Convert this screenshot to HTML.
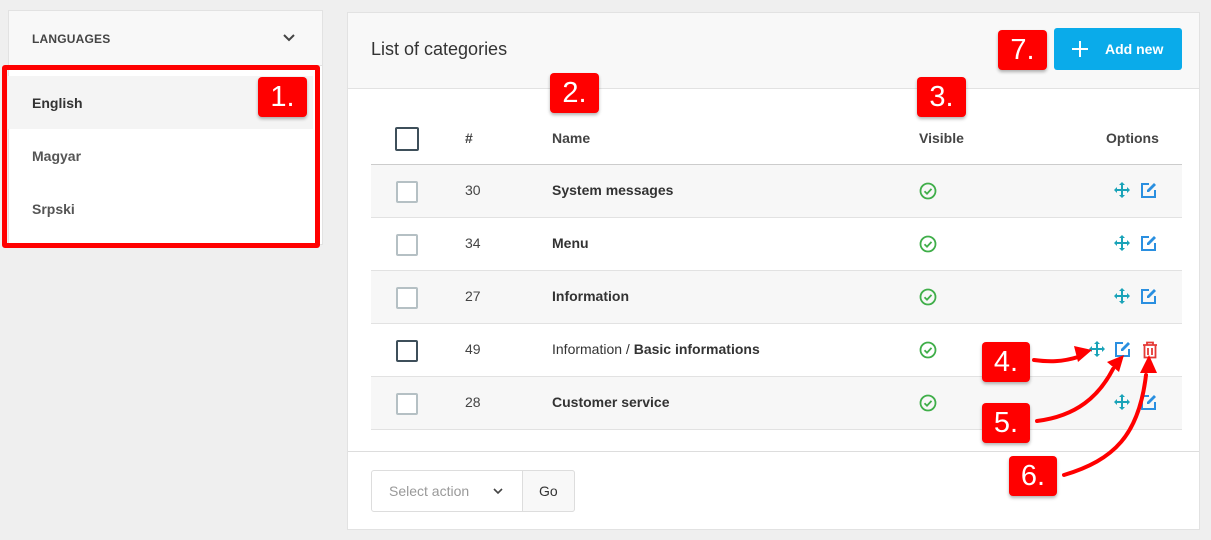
<!DOCTYPE html>
<html><head><style>
*{box-sizing:border-box;margin:0;padding:0}
body{width:1211px;height:540px;background:#efefef;font-family:"Liberation Sans",sans-serif;position:relative;overflow:hidden;color:#333}
.abs{position:absolute}
.badge{position:absolute;background:#f00;color:#fff;font-size:29px;border-radius:4px;text-align:center;line-height:40px;height:40px;width:42px;box-shadow:0 2px 3px rgba(0,0,0,.3)}
.row{position:absolute;left:371px;width:811px;height:53px;border-bottom:1px solid #e2e2e2;font-size:14px}
.row.s{background:#f7f7f7}
.cb{position:absolute;left:25px;top:16px;width:22px;height:22px;border:2px solid #b5c0c4;border-radius:2px;background:#fff}
.num{position:absolute;left:94px;top:17px;color:#444}
.nm{position:absolute;left:181px;top:17px;font-weight:bold;color:#333}
.vis{position:absolute;left:548px;top:17px}
.mv{position:absolute;left:743px;top:17px}
.ed{position:absolute;left:769px;top:16px}
</style></head><body>
<div class="abs" style="left:8px;top:10px;width:315px;height:235px;background:#fff;border:1px solid #e2e2e2"></div>
<div class="abs" style="left:8px;top:10px;width:315px;height:56px;background:#f8f8f8;border:1px solid #e2e2e2"></div>
<div class="abs" style="left:32px;top:32px;font-size:12px;font-weight:bold;color:#444;letter-spacing:.2px">LANGUAGES</div>
<svg class="abs" style="left:282px;top:33px" width="14" height="10"><path d="M2 2l5 5 5-5" stroke="#444" stroke-width="2" fill="none"/></svg>
<div class="abs" style="left:8px;top:76px;width:305px;height:53px;background:#f4f4f4"></div>
<div class="abs" style="left:32px;top:95px;font-size:14px;font-weight:bold;color:#333">English</div>
<div class="abs" style="left:32px;top:148px;font-size:14px;font-weight:bold;color:#555">Magyar</div>
<div class="abs" style="left:32px;top:201px;font-size:14px;font-weight:bold;color:#555">Srpski</div>
<div class="abs" style="left:2px;top:65px;width:318px;height:183px;border:5px solid #f00;border-radius:3px"></div>
<div class="badge" style="left:258px;top:77px;width:49px">1.</div>

<div class="abs" style="left:347px;top:12px;width:853px;height:518px;background:#fff;border:1px solid #e2e2e2"></div>
<div class="abs" style="left:347px;top:12px;width:853px;height:77px;background:#f8f8f8;border:1px solid #e2e2e2"></div>
<div class="abs" style="left:371px;top:39px;font-size:18px;color:#333">List of categories</div>
<div class="abs" style="left:1054px;top:28px;width:128px;height:42px;background:#0aabea;border-radius:3px;color:#fff;font-size:14px;font-weight:bold">
<svg class="abs" style="left:17px;top:12px" width="18" height="18"><path d="M9 1v16M1 9h16" stroke="#fff" stroke-width="2"/></svg>
<span class="abs" style="left:51px;top:13px">Add new</span></div>
<div class="badge" style="left:998px;top:30px;width:49px">7.</div>

<div class="abs" style="left:371px;top:112px;width:811px;height:53px;border-bottom:1px solid #ccc"></div>
<div class="abs" style="left:395px;top:127px;width:24px;height:24px;border:2px solid #3e4f5a;border-radius:2px"></div>
<div class="abs" style="left:465px;top:130px;font-size:14px;font-weight:bold;color:#444">#</div>
<div class="abs" style="left:552px;top:130px;font-size:14px;font-weight:bold;color:#444">Name</div>
<div class="abs" style="left:919px;top:130px;font-size:14px;font-weight:bold;color:#444">Visible</div>
<div class="abs" style="left:1106px;top:130px;font-size:14px;font-weight:bold;color:#444">Options</div>
<div class="badge" style="left:550px;top:73px;width:49px">2.</div>
<div class="badge" style="left:917px;top:77px;width:49px">3.</div>

<svg width="0" height="0" style="position:absolute">
<defs>
<g id="chk"><circle cx="9" cy="9" r="7.5" fill="none" stroke="#3fae49" stroke-width="1.8"/><path d="M5.5 9.2l2.5 2.5 4.5-4.8" fill="none" stroke="#3fae49" stroke-width="1.8"/></g>
<g id="mov" fill="#1aa3b8"><path d="M8 0l3 3H9v4h4V5l3 3-3 3V9H9v4h2l-3 3-3-3h2V9H3v2L0 8l3-3v2h4V3H5z"/></g>
<g id="edt"><path d="M9 3H2v13h13V9" fill="none" stroke="#2a8fe0" stroke-width="2"/><path d="M7 9l7-7 2 2-7 7H7z" fill="#2a8fe0"/></g>
</defs></svg>

<div class="row s" style="top:165px"><div class="cb"></div><div class="num">30</div><div class="nm">System messages</div>
<svg class="vis" width="18" height="18"><use href="#chk"/></svg><svg class="mv" width="16" height="16"><use href="#mov"/></svg><svg class="ed" width="18" height="18"><use href="#edt"/></svg></div>
<div class="row" style="top:218px"><div class="cb"></div><div class="num">34</div><div class="nm">Menu</div>
<svg class="vis" width="18" height="18"><use href="#chk"/></svg><svg class="mv" width="16" height="16"><use href="#mov"/></svg><svg class="ed" width="18" height="18"><use href="#edt"/></svg></div>
<div class="row s" style="top:271px"><div class="cb"></div><div class="num">27</div><div class="nm">Information</div>
<svg class="vis" width="18" height="18"><use href="#chk"/></svg><svg class="mv" width="16" height="16"><use href="#mov"/></svg><svg class="ed" width="18" height="18"><use href="#edt"/></svg></div>
<div class="row" style="top:324px"><div class="cb" style="border-color:#3e4f5a"></div><div class="num">49</div><div class="nm" style="font-weight:normal">Information / <b>Basic informations</b></div>
<svg class="vis" width="18" height="18"><use href="#chk"/></svg>
<svg class="mv" style="left:718px" width="16" height="16"><use href="#mov"/></svg><svg class="ed" style="left:743px" width="18" height="18"><use href="#edt"/></svg>
<svg class="abs" style="left:770px;top:17px" width="18" height="18"><path d="M2 4h14M6 4V1.5h6V4M3.5 4v12.5h11V4M7 7v7M11 7v7" fill="none" stroke="#e53935" stroke-width="1.8"/></svg></div>
<div class="row s" style="top:377px"><div class="cb"></div><div class="num">28</div><div class="nm">Customer service</div>
<svg class="vis" width="18" height="18"><use href="#chk"/></svg><svg class="mv" width="16" height="16"><use href="#mov"/></svg><svg class="ed" width="18" height="18"><use href="#edt"/></svg></div>

<div class="abs" style="left:348px;top:451px;width:851px;border-top:1px solid #ddd"></div>
<div class="abs" style="left:371px;top:470px;width:204px;height:42px;border:1px solid #ddd;border-radius:3px;background:#fff"></div>
<div class="abs" style="left:522px;top:470px;width:53px;height:42px;border:1px solid #ddd;border-radius:0 3px 3px 0;background:#f8f8f8"></div>
<div class="abs" style="left:389px;top:483px;font-size:14px;color:#999">Select action</div>
<svg class="abs" style="left:493px;top:487px" width="10" height="8"><path d="M1 2l4 4 4-4" stroke="#444" stroke-width="1.6" fill="none"/></svg>
<div class="abs" style="left:539px;top:483px;font-size:14px;color:#333">Go</div>

<div class="badge" style="left:982px;top:342px;width:48px">4.</div>
<div class="badge" style="left:982px;top:403px;width:48px">5.</div>
<div class="badge" style="left:1009px;top:456px;width:48px">6.</div>
<svg class="abs" style="left:0;top:0" width="1211" height="540">
<g stroke="#f00" stroke-width="4" fill="none" stroke-linecap="round">
<path d="M1034 360c15 2 28 2 44-3"/>
<path d="M1037 421c40-5 62-25 76-52"/>
<path d="M1064 475c50-15 75-40 82-100"/>
</g>
<g fill="#f00">
<path d="M1092 350l-18-4 4 16z"/>
<path d="M1124 355l-17 7 12 10z"/>
<path d="M1149 355l-9 18 17 0z"/>
</g>
</svg>
</body></html>
